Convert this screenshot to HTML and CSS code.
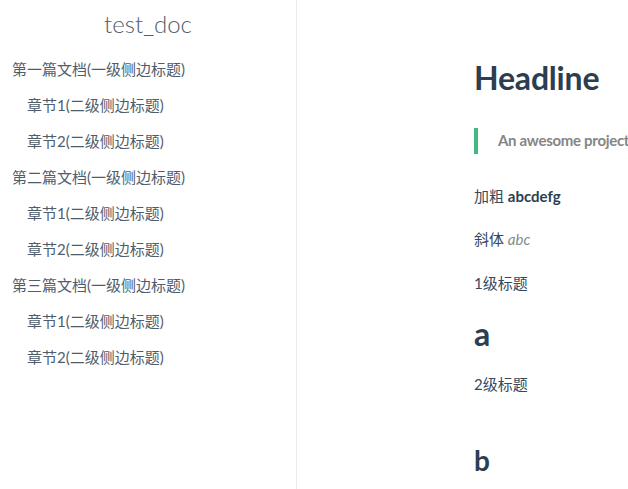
FILE: index.html
```html
<!DOCTYPE html>
<html lang="zh">
<head>
<meta charset="utf-8">
<title>test_doc</title>
<link rel="stylesheet" href="styles.css">
</head>
<body>
<div class="app">
  <aside class="sidebar">
    <h1 class="app-name">test_doc</h1>
    <ul class="nav">
      <li class="lv1">第一篇文档(一级侧边标题)</li>
      <li class="lv2">章节1(二级侧边标题)</li>
      <li class="lv2">章节2(二级侧边标题)</li>
      <li class="lv1">第二篇文档(一级侧边标题)</li>
      <li class="lv2">章节1(二级侧边标题)</li>
      <li class="lv2">章节2(二级侧边标题)</li>
      <li class="lv1">第三篇文档(一级侧边标题)</li>
      <li class="lv2">章节1(二级侧边标题)</li>
      <li class="lv2">章节2(二级侧边标题)</li>
    </ul>
  </aside>
  <main class="content">
    <article class="markdown">
      <h1 class="first">Headline</h1>
      <blockquote><p>An awesome project.</p></blockquote>
      <p>加粗 <strong>abcdefg</strong></p>
      <p>斜体 <em>abc</em></p>
      <p>1级标题</p>
      <h1>a</h1>
      <p>2级标题</p>
      <h2>b</h2>
    </article>
  </main>
</div>
</body>
</html>
```
FILE: styles.css
```css
* { box-sizing: border-box; }
html, body {
  margin: 0;
  height: 100%;
  background: #fff;
}
body {
  font-family: Lato, "Noto Sans CJK SC", sans-serif;
  font-size: 15px;
  color: #34495e;
  overflow: hidden;
}
.app {
  display: flex;
  height: 100%;
}
.sidebar {
  width: 297px;
  flex: none;
  border-right: 1px solid #ebebeb;
  color: #505d6b;
}
.app-name {
  margin: 0 0 3px;
  font-size: 24px;
  font-weight: 300;
  line-height: 48px;
  text-align: center;
  color: #505d6b;
}
.nav {
  list-style: none;
  margin: 0;
  padding: 0;
}
.nav li {
  font-size: 15px;
  line-height: 36px;
  white-space: nowrap;
}
.nav .lv1 { padding-left: 12px; }
.nav .lv2 { padding-left: 27px; }
.content {
  flex: 1;
  min-width: 0;
  overflow: hidden;
  padding: 58px 0 0 177px;
}
.markdown {
  white-space: nowrap;
}
.markdown h1 {
  font-size: 32px;
  font-weight: 700;
  line-height: 40px;
  margin: 18px 0 16px;
  color: #2c3e50;
  letter-spacing: -0.2px;
}
.markdown h1.first { margin-top: 0; }
.markdown h2 {
  font-size: 28px;
  font-weight: 700;
  line-height: 35px;
  margin: 45px 0 12px;
  color: #2c3e50;
}
.markdown p {
  margin: 18px 0;
  line-height: 25.6px;
}
.markdown strong {
  font-weight: 700;
  color: #2c3e50;
}
.markdown em {
  color: #7f8c8d;
}
blockquote {
  margin: 30px 0;
  padding-left: 20px;
  border-left: 4px solid #42b983;
  color: #858585;
}
blockquote p {
  font-weight: 700;
  letter-spacing: -0.3px;
}
```
